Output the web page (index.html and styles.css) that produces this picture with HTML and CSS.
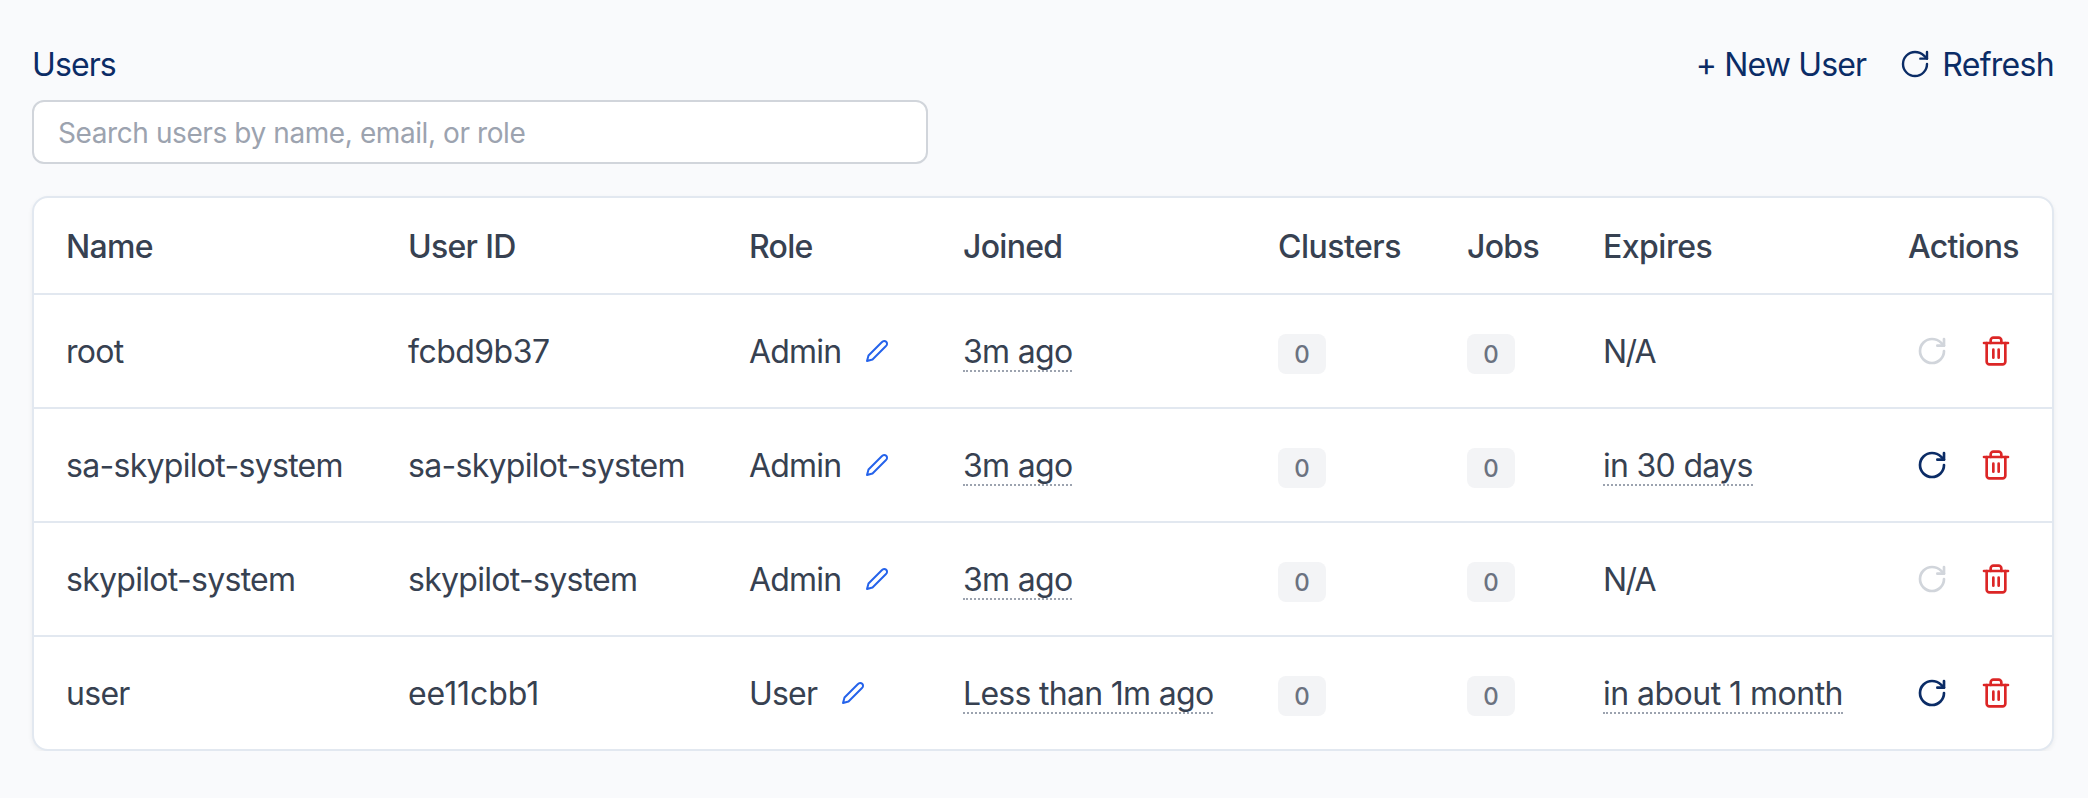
FILE: index.html
```html
<!DOCTYPE html>
<html lang="en">
<head>
<meta charset="utf-8">
<title>Users</title>
<link rel="stylesheet" href="styles.css">
</head>
<body>
<svg class="sprite" aria-hidden="true">
  <symbol id="rotate" viewBox="0 0 24 24"><path d="M21 12a9 9 0 1 1-9-9c2.52 0 4.93 1 6.74 2.74L21 8"/><path d="M21 3v5h-5"/></symbol>
  <symbol id="trash" viewBox="0 0 24 24"><path d="M3 6h18"/><path d="M19 6v14c0 1-1 2-2 2H7c-1 0-2-1-2-2V6"/><path d="M8 6V4c0-1 1-2 2-2h4c1 0 2 1 2 2v2"/><path d="M10 11v6"/><path d="M14 11v6"/></symbol>
  <symbol id="pen" viewBox="0 0 24 24"><path d="M17 3a2.85 2.83 0 1 1 4 4L7.5 20.5 2 22l1.5-5.5Z"/></symbol>
</svg>
<main class="page">
  <header class="topbar">
    <h1 class="title">Users</h1>
    <div class="toolbar">
      <button class="link new">+ New User</button>
      <button class="link"><svg class="icon thin"><use href="#rotate"/></svg>Refresh</button>
    </div>
  </header>
  <input class="search" type="text" placeholder="Search users by name, email, or role">
  <section class="card">
    <table class="users">
      <colgroup><col class="c-name"><col class="c-id"><col class="c-role"><col class="c-joined"><col class="c-clusters"><col class="c-jobs"><col class="c-expires"><col class="c-actions"></colgroup>
      <thead>
        <tr><th>Name</th><th>User ID</th><th>Role</th><th>Joined</th><th class="wide">Clusters</th><th>Jobs</th><th class="wide">Expires</th><th>Actions</th></tr>
      </thead>
      <tbody>
        <tr>
          <td>root</td><td class="wide">fcbd9b37</td>
          <td><div class="role">Admin<svg class="pen"><use href="#pen"/></svg></div></td>
          <td><span class="time">3m ago</span></td>
          <td><span class="badge">0</span></td><td><span class="badge">0</span></td>
          <td class="tight">N/A</td>
          <td><div class="actions"><svg class="icon off"><use href="#rotate"/></svg><svg class="icon del"><use href="#trash"/></svg></div></td>
        </tr>
        <tr>
          <td>sa-skypilot-system</td><td>sa-skypilot-system</td>
          <td><div class="role">Admin<svg class="pen"><use href="#pen"/></svg></div></td>
          <td><span class="time">3m ago</span></td>
          <td><span class="badge">0</span></td><td><span class="badge">0</span></td>
          <td><span class="time">in 30 days</span></td>
          <td><div class="actions"><svg class="icon"><use href="#rotate"/></svg><svg class="icon del"><use href="#trash"/></svg></div></td>
        </tr>
        <tr>
          <td>skypilot-system</td><td>skypilot-system</td>
          <td><div class="role">Admin<svg class="pen"><use href="#pen"/></svg></div></td>
          <td><span class="time">3m ago</span></td>
          <td><span class="badge">0</span></td><td><span class="badge">0</span></td>
          <td class="tight">N/A</td>
          <td><div class="actions"><svg class="icon off"><use href="#rotate"/></svg><svg class="icon del"><use href="#trash"/></svg></div></td>
        </tr>
        <tr>
          <td>user</td><td class="digits">ee11cbb1</td>
          <td><div class="role">User<svg class="pen"><use href="#pen"/></svg></div></td>
          <td><span class="time">Less than 1m ago</span></td>
          <td><span class="badge">0</span></td><td><span class="badge">0</span></td>
          <td class="wide"><span class="time">in about 1 month</span></td>
          <td><div class="actions"><svg class="icon"><use href="#rotate"/></svg><svg class="icon del"><use href="#trash"/></svg></div></td>
        </tr>
      </tbody>
    </table>
  </section>
</main>
</body>
</html>
```
FILE: styles.css
```css
* { box-sizing: border-box; }
body {
  margin: 0;
  background: #f9fafc;
  color: #374151;
  font-family: Inter, "Liberation Sans", sans-serif;
  font-size: 32px;
  line-height: 48px;
  letter-spacing: -0.7px;
}
.sprite { display: none; }
.page { padding: 41px 34px 0 32px; }
.topbar { display: flex; justify-content: space-between; height: 48px; margin-bottom: 11px; }
.title { margin: 0; font-size: inherit; font-weight: 400; color: #0b2c66; letter-spacing: -0.9px; }
.toolbar { display: flex; gap: 33px; }
.link {
  display: flex; align-items: center; gap: 11px;
  padding: 0; border: 0; background: none;
  font: inherit; letter-spacing: inherit; color: #0b2c66;
}
.link .icon { margin-top: -2px; }
.new { letter-spacing: -0.85px; }
.search {
  display: block; width: 896px; height: 64px; padding: 2px 24px 0;
  border: 2px solid #d1d5db; border-radius: 12px; background: #fff;
  font: inherit; font-size: 28px; letter-spacing: -0.41px;
}
.search::placeholder { color: #9ca3af; opacity: 1; }
.card {
  margin-top: 32px; height: 555px; overflow: hidden;
  border: 2px solid #e2e8f0; border-radius: 16px; background: #fff;
  box-shadow: 0 2px 5px rgba(0, 0, 0, 0.06);
}
.users { width: 2018px; table-layout: fixed; border-collapse: separate; border-spacing: 0; }
.c-name { width: 342px; }
.c-id { width: 341px; }
.c-role { width: 214px; }
.c-joined { width: 315px; }
.c-clusters { width: 189px; }
.c-jobs { width: 136px; }
.c-expires { width: 305px; }
th, td { padding: 2px 0 0 32px; text-align: left; white-space: nowrap; vertical-align: middle; }
th { height: 97px; font-weight: 500; border-bottom: 2px solid #e2e8f0; }
td { height: 114px; border-bottom: 2px solid #e2e8f0; }
tbody tr:last-child td { height: 112px; border-bottom: 0; }
.wide { letter-spacing: -0.52px; }
.tight { letter-spacing: -1.7px; }
.digits { letter-spacing: -0.05px; }
.icon { display: block; width: 32px; height: 32px; }
svg { fill: none; stroke: #0b2c66; stroke-width: 2; stroke-linecap: round; stroke-linejoin: round; }
.thin { stroke-width: 1.8; }
.off { stroke: #d1d5db; }
.del { stroke: #dc2626; }
.role { display: flex; align-items: center; letter-spacing: -0.8px; }
.pen { width: 24px; height: 24px; margin: -2px 0 0 24px; stroke: #2563eb; }
.time { display: inline-block; line-height: 36px; border-bottom: 2px dotted #9ca3af; }
.badge {
  display: inline-flex; align-items: center; justify-content: center;
  width: 48px; height: 40px; padding-top: 2px; border-radius: 8px;
  background: #f3f4f6; color: #6b7280; font-size: 24px; font-weight: 500; letter-spacing: 0;
}
.actions { display: flex; gap: 32px; margin-bottom: 2px; padding-left: 8px; }
```
